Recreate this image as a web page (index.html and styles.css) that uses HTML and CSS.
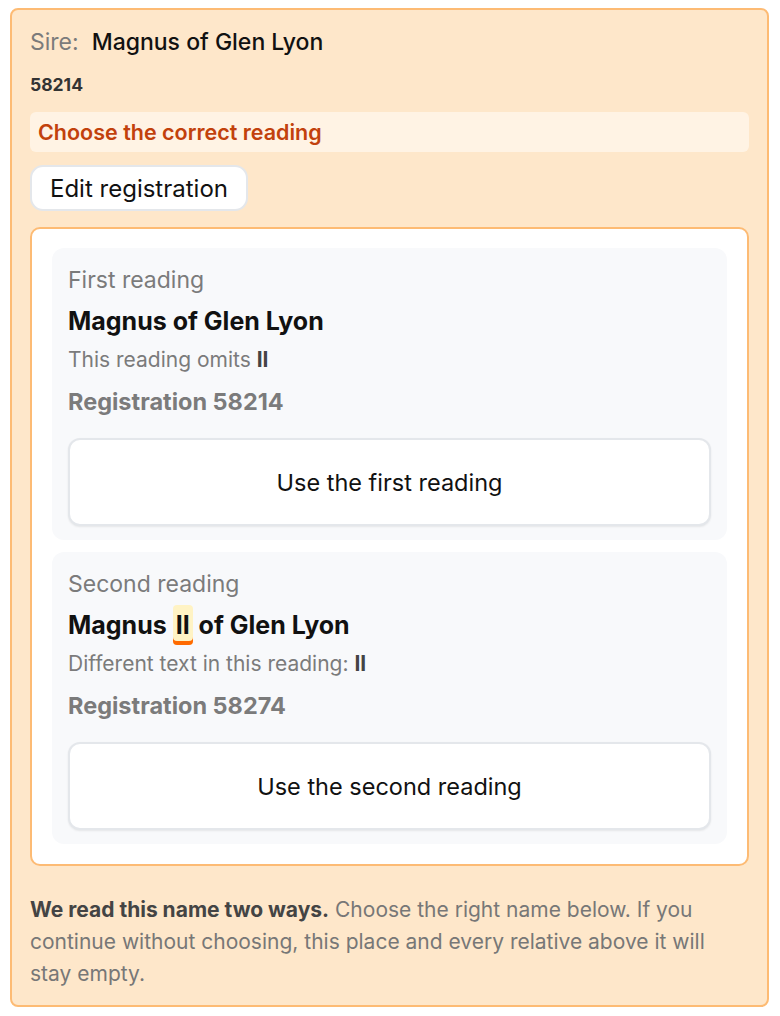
FILE: index.html
```html
<!DOCTYPE html>
<html lang="en">

<head>
    <meta charset="UTF-8">
    <meta name="viewport" content="width=device-width, initial-scale=1.0" />
    <title>Sire reading</title>
    <link rel="stylesheet" href="styles.css">
</head>

<body>
    <div class="panel">
        <div class="sire-line">
            <span class="sire-label">Sire:</span>
            <span class="sire-name">Magnus of Glen Lyon</span>
        </div>
        <div class="sire-reg">58214</div>

        <div class="notice">Choose the correct reading</div>

        <button class="edit-btn">Edit registration</button>

        <!-- Both readings of the name -->
        <div class="readings">
            <div class="reading">
                <div class="reading-title">First reading</div>
                <div class="reading-name">Magnus of Glen Lyon</div>
                <div class="reading-note">This reading omits <b>II</b></div>
                <div class="reading-reg">Registration 58214</div>
                <button class="pick-btn">Use the first reading</button>
            </div>

            <div class="reading">
                <div class="reading-title">Second reading</div>
                <div class="reading-name">Magnus <mark class="diff">II</mark> of Glen Lyon</div>
                <div class="reading-note">Different text in this reading: <b>II</b></div>
                <div class="reading-reg">Registration 58274</div>
                <button class="pick-btn">Use the second reading</button>
            </div>
        </div>

        <p class="help"><b>We read this name two ways.</b> Choose the right name below. If you continue without choosing, this place and every relative above it will stay empty.</p>
    </div>
</body>

</html>
```

FILE: styles.css
```css
body {
    margin: 0;
    padding: 8px 11px 8px 10px;
    font-family: Inter, "Noto Sans", sans-serif;
    background: #ffffff;
    color: #111111;
}

.panel {
    background: #fee7ca;
    border: 2px solid #fdbb74;
    border-radius: 8px;
    padding: 16px 18px 15px;
}

.sire-line {
    display: flex;
    gap: 13px;
    align-items: baseline;
    font-size: 23px;
    line-height: 32px;
}

.sire-label {
    color: #7b7b7b;
}

.sire-name {
    font-weight: 500;
    color: #111111;
}

.sire-reg {
    margin-top: 16px;
    font-size: 17.5px;
    font-weight: 700;
    color: #333333;
    line-height: 22px;
}

.notice {
    margin-top: 16px;
    background: #fff3e4;
    border-radius: 6px;
    padding: 0 8px;
    line-height: 40px;
    font-size: 21.5px;
    font-weight: 600;
    color: #c2410c;
}

.edit-btn {
    display: block;
    margin-top: 13px;
    background: #ffffff;
    border: 2px solid #e4e7eb;
    border-radius: 13px;
    padding: 0 18px;
    height: 46px;
    font-family: inherit;
    font-size: 24px;
    color: #111111;
}

/* white frame around the two reading cards */
.readings {
    margin-top: 16px;
    background: #ffffff;
    border: 2px solid #fdbb74;
    border-radius: 10px;
    padding: 19px 20px 20px;
    display: flex;
    flex-direction: column;
    gap: 12px;
}

.reading {
    background: #f8f9fb;
    border-radius: 12px;
    padding: 17px 16px 14px;
}

.reading-title {
    font-size: 23px;
    color: #7b7b7b;
    line-height: 30px;
}

.reading-name {
    margin-top: 8px;
    height: 36px;
    font-size: 25px;
    font-weight: 700;
    line-height: 36px;
    color: #111111;
}

/* highlighted word that only the second reading has */
.diff {
    display: inline-block;
    background: #fff3c4;
    color: inherit;
    padding: 0 3px;
    margin: -2px 0;
    line-height: 40px;
    border-radius: 4px;
    box-shadow: inset 0 -4px 0 #ff6a00;
}

.reading-note {
    margin-top: 7px;
    font-size: 21px;
    line-height: 28px;
    color: #7b7b7b;
}

.reading-note b {
    color: #444444;
}

.reading-reg {
    margin-top: 13px;
    font-size: 23.5px;
    font-weight: 700;
    line-height: 30px;
    color: #7b7b7b;
}

.pick-btn {
    display: block;
    width: 100%;
    margin-top: 21px;
    height: 88px;
    background: #ffffff;
    border: 2px solid #e4e7eb;
    border-radius: 12px;
    box-shadow: 0 1px 2px rgba(0, 0, 0, 0.08);
    font-family: inherit;
    font-size: 23.5px;
    color: #111111;
}

.help {
    margin: 28px 0 0;
    font-size: 21px;
    line-height: 32px;
    color: #777777;
}

.help b {
    color: #444444;
}
```
